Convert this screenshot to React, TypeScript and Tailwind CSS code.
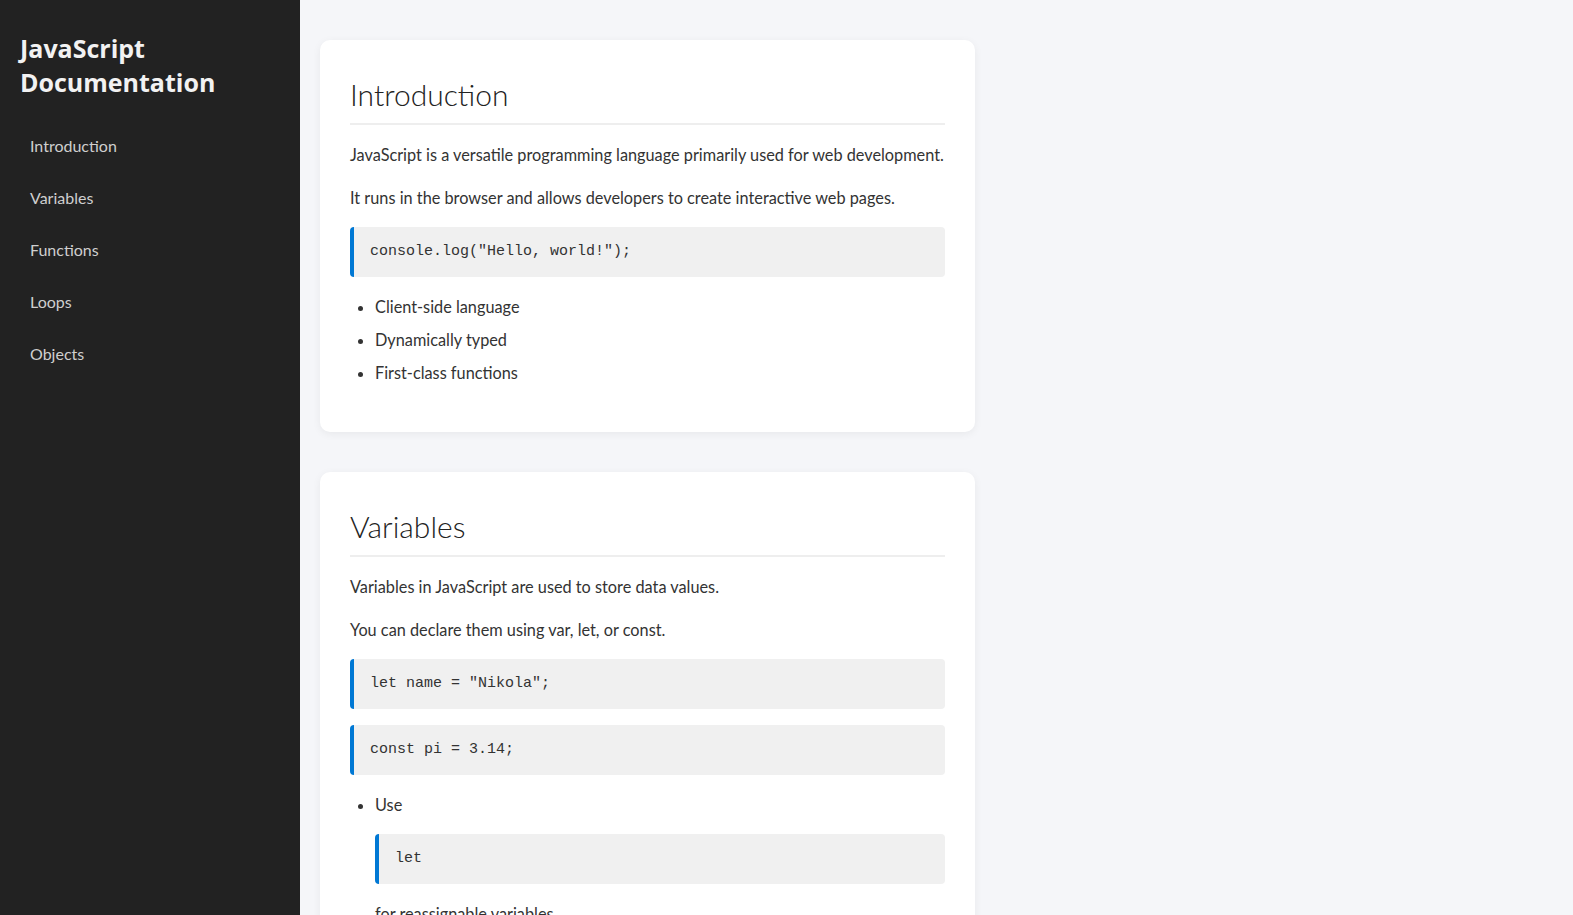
import React from 'react'

const navItems = ['Introduction', 'Variables', 'Functions', 'Loops', 'Objects']

const Code = ({ children }: { children: React.ReactNode }) => (
  <pre className="my-4 rounded border-l-4 border-[#0078d4] bg-[#f0f0f0] px-4 py-4 font-['Liberation_Mono',monospace] text-[15px] leading-[18px] text-[#333]">
    <code>{children}</code>
  </pre>
)

const Section = ({ title, children }: { title: string; children: React.ReactNode }) => (
  <section className="mb-10 w-[655px] rounded-[10px] bg-white p-[30px] shadow-[0_2px_8px_rgba(0,0,0,0.06)]">
    {/* heading */}
    <h2 className="mt-[6px] border-b-2 border-[#eee] pb-[10px] text-[30px] leading-[37px] font-light text-[#222]">{title}</h2>
    <div className="text-[16.3px] leading-[27px] text-[#333]">{children}</div>
  </section>
)

export default function App() {
  return (
    <div className="flex h-[915px] overflow-hidden bg-[#f5f6f9] font-['Lato','Open_Sans',sans-serif]">
      {/* sidebar */}
      <aside className="w-[300px] shrink-0 bg-[#222] px-5 pt-[31px]">
        <h1 className="font-['Open_Sans',sans-serif] text-[25px] leading-[34px] font-bold text-[#f2f2f2]">JavaScript Documentation</h1>
        <nav className="mt-[25px] flex flex-col gap-2">
          {navItems.map((item) => (
            <a key={item} className="px-[10px] py-[10px] text-base leading-6 text-[#cfcfcf]">
              {item}
            </a>
          ))}
        </nav>
      </aside>

      {/* content */}
      <main className="flex-1 overflow-hidden pl-5 pt-10">
        <Section title="Introduction">
          <p className="my-4">JavaScript is a versatile programming language primarily used for web development.</p>
          <p className="my-4">It runs in the browser and allows developers to create interactive web pages.</p>
          <Code>console.log("Hello, world!");</Code>
          <ul className="my-4 list-disc pl-[25px]">
            <li className="mb-[6px]">Client-side language</li>
            <li className="mb-[6px]">Dynamically typed</li>
            <li>First-class functions</li>
          </ul>
        </Section>

        <Section title="Variables">
          <p className="my-4">Variables in JavaScript are used to store data values.</p>
          <p className="my-4">You can declare them using var, let, or const.</p>
          <Code>let name = "Nikola";</Code>
          <Code>const pi = 3.14;</Code>
          <ul className="my-4 list-disc pl-[25px]">
            <li className="mb-[6px]">
              Use
              <Code>let</Code>
              for reassignable variables
            </li>
          </ul>
        </Section>
      </main>
    </div>
  )
}
